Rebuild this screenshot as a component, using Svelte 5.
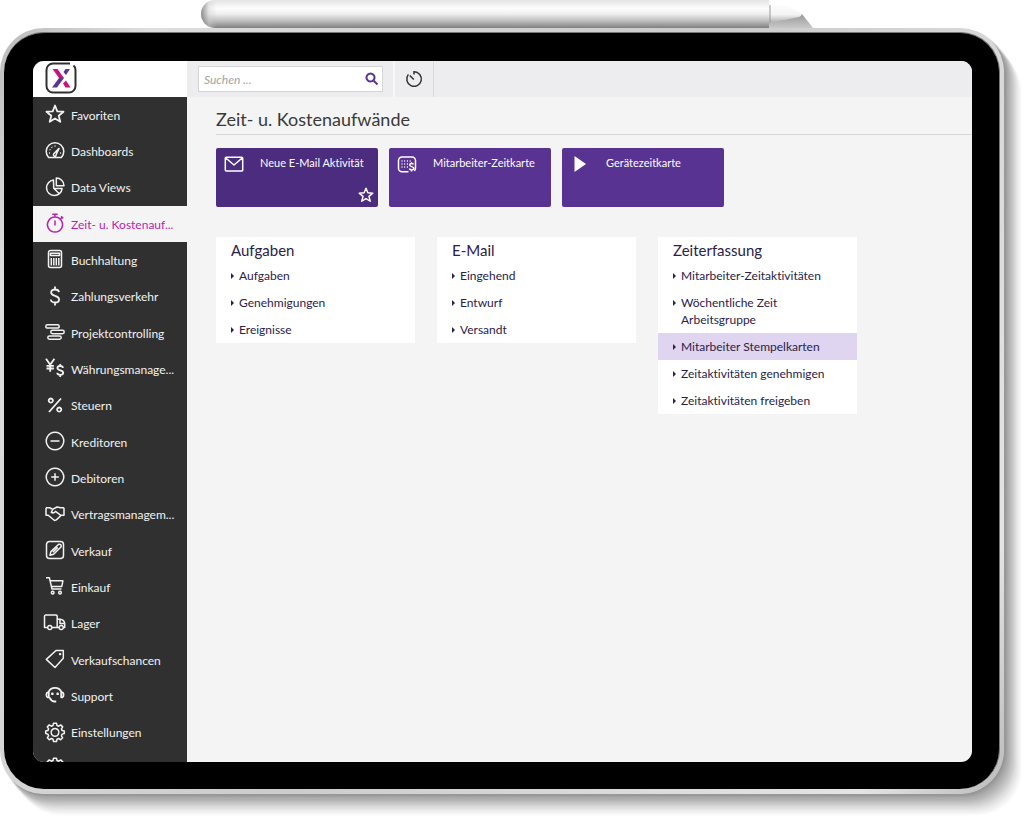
<script>
  const menu = [
    { icon: 'star', label: 'Favoriten' },
    { icon: 'gauge', label: 'Dashboards' },
    { icon: 'pie', label: 'Data Views' },
    { icon: 'timer', label: 'Zeit- u. Kostenauf...', active: true },
    { icon: 'calculator', label: 'Buchhaltung' },
    { icon: 'dollar', label: 'Zahlungsverkehr' },
    { icon: 'gantt', label: 'Projektcontrolling' },
    { icon: 'currency', label: 'Währungsmanage...' },
    { icon: 'percent', label: 'Steuern' },
    { icon: 'minus', label: 'Kreditoren' },
    { icon: 'plus', label: 'Debitoren' },
    { icon: 'handshake', label: 'Vertragsmanagem...' },
    { icon: 'edit', label: 'Verkauf' },
    { icon: 'cart', label: 'Einkauf' },
    { icon: 'truck', label: 'Lager' },
    { icon: 'tag', label: 'Verkaufschancen' },
    { icon: 'support', label: 'Support' },
    { icon: 'gear', label: 'Einstellungen' }
  ];

  const tiles = [
    { icon: 'mail', label: 'Neue E-Mail Aktivität', hovered: true },
    { icon: 'timecard', label: 'Mitarbeiter-Zeitkarte' },
    { icon: 'play', label: 'Gerätezeitkarte' }
  ];

  const cards = [
    { title: 'Aufgaben', links: ['Aufgaben', 'Genehmigungen', 'Ereignisse'] },
    { title: 'E-Mail', links: ['Eingehend', 'Entwurf', 'Versandt'] },
    {
      title: 'Zeiterfassung',
      links: [
        'Mitarbeiter-Zeitaktivitäten',
        'Wöchentliche Zeit Arbeitsgruppe',
        'Mitarbeiter Stempelkarten',
        'Zeitaktivitäten genehmigen',
        'Zeitaktivitäten freigeben'
      ],
      selected: 2
    }
  ];

  const bold = ['star', 'dollar', 'currency', 'percent', 'support'];

  const paths = {
    star: 'M10 1.500l2.300 5.800 6.200.4-4.800 4 1.600 6.100L10 14.400l-5.300 3.400 1.600-6.100-4.800-4 6.200-.4z',
    gauge: 'M3.600 17.500a8.800 8.800 0 1 1 12.800 0zM8.800 13.800a1.400 1.400 0 1 0 2.400.6l2.900-6zM4 13h1M4.600 9.500l.8.4M6.600 6.900l.5.7M10 5.500v1M15.100 13h1',
    pie: 'M8.500 3a7.800 7.800 0 1 0 8.600 8.600L8.700 11.300zM11.300 1v7.700h7.700A7.700 7.700 0 0 0 11.300 1zM9 11.500l4.800 4.800',
    timer: 'M10 4a7.500 7.500 0 1 0 .01 0zM10 4V1.500M7.300 1.200h5.400M10 7.500v5M15.600 5.800l1.700-1.700M16.200 3.200l2 2',
    calculator: 'M5.500 1.500h9a2 2 0 0 1 2 2v13a2 2 0 0 1-2 2h-9a2 2 0 0 1-2-2v-13a2 2 0 0 1 2-2zM5.500 4.300h9v2.200h-9zM6.300 9v7.500M8.800 9v7.500M11.300 9v7.500M13.800 9v7.500',
    dollar: 'M14 6.200C13.700 4.300 12.100 3.500 10 3.500c-2.300 0-3.900 1.100-3.900 3 0 4.200 8 2.500 8 6.900 0 2.100-1.700 3.100-4.100 3.100-2.300 0-4-.9-4.200-3M10 .5v3M10 16.500v3',
    gantt: 'M2.500 2.700h10a1.400 1.400 0 0 1 0 3.400h-10a1.400 1.400 0 0 1 0-3.400zM7.500 8.300h10a1.400 1.400 0 0 1 0 3.400h-10a1.400 1.400 0 0 1 0-3.400zM4.500 13.900h10a1.400 1.400 0 0 1 0 3.400h-10a1.400 1.400 0 0 1 0-3.400z',
    currency: 'M1 .8l4.200 6 4.200-6M5.200 6.800v7M1.500 7.800h7.400M1.500 10.500h7.400M18 9.800c-.2-1.200-1.300-1.800-2.800-1.800-1.700 0-2.800.8-2.800 2.100 0 2.900 5.800 1.600 5.800 4.600 0 1.500-1.300 2.100-3 2.100s-2.900-.6-3-2M15.200 6v2M15.200 16.800v2.200',
    percent: 'M16 3.500L4 17M5.800 3.500a2.100 2.100 0 1 0 .01 0zM14.200 12.500a2.100 2.100 0 1 0 .01 0z',
    minus: 'M10 1.300a8.700 8.700 0 1 0 .01 0zM5.500 10h9',
    plus: 'M10 1.300a8.700 8.700 0 1 0 .01 0zM6.200 10h7.600M10 6.200v7.600',
    handshake: 'M1 3.800h3.500l2.300.8M19 3.800h-3.300L12 3 8 5.200 6.200 8.300c1.300.9 3.200.4 4.300-.9l5.700 4.300M1 3.800v7.400h2.200l6.300 5.300 1.800-.6 5-4.600H19V3.800M8.500 5l-3.200-.4',
    edit: 'M4.500 1.500h11a3 3 0 0 1 3 3v11a3 3 0 0 1-3 3h-11a3 3 0 0 1-3-3v-11a3 3 0 0 1 3-3zM5 15.200l.9-3.600 7.800-7.400q2.600-.4 2.500 2.500l-7.600 7.600zM12.700 7.400l-4.800 4.800',
    cart: 'M1 1.800h3.400L7 13h9.500M4.900 4.800h13L16.800 10.400H6.400M7.700 15.300a1.300 1.300 0 1 0 .01 0zM15 15.300a1.300 1.300 0 1 0 .01 0z',
    truck: 'M2.500 14.500H-.5v-11.200a1.200 1.200 0 0 1 1.200-1.200h10.300a1.200 1.200 0 0 1 1.200 1.200v11.200H7.200M12.200 6.300h3a4.500 4.500 0 0 1 4.500 4.500v3.700h-1M15 6.500v4h4.600M12.200 14.500h1.800M4.800 12.400a2.100 2.100 0 1 0 .01 0zM16.200 12.400a2.100 2.100 0 1 0 .01 0z',
    tag: 'M11 1.500h7.300v7.800L10 18.500 1.300 10.400zM14.700 4.700h.8v.8h-.8z',
    support: 'M3.600 7a6.700 6 0 0 1 12.800 0M3.800 7.300v5H2.600C1 12 1 7.600 2.600 7.300zM16.200 7.300v5h1.200c1.600-.3 1.600-4.700 0-5zM4.600 12.600c1 2.300 2.400 3.500 4.600 3.900h2M7 8.500h.7v.7H7zM12.300 8.500h.7v.7h-.7z',
    gear: 'M8.500 1.200h3l.5 2.300 1.700.7 2-1.300 2 2-1.300 2 .7 1.700 2.200.5v2.400l-2.200.6-.7 1.800 1.300 1.900-2 2-2-1.300-1.700.7-.5 2.300h-3l-.5-2.300-1.700-.7-2 1.300-2-2 1.300-1.900-.7-1.800-2.200-.6V9.100l2.200-.5.7-1.700-1.300-2 2-2 2 1.300 1.700-.7zM10 6.400a3.900 3.900 0 1 0 .01 0z',
    mail: 'M2.300 3.300h15.400a1 1 0 0 1 1 1v11.600a1 1 0 0 1-1 1H2.300a1 1 0 0 1-1-1V4.300a1 1 0 0 1 1-1zM1.800 4l8.200 7 8.200-7',
    timecard: 'M11.500 17.800H5A3.500 3.500 0 0 1 1.500 14.300V6.500A3.500 3.500 0 0 1 5 3h10a3.500 3.500 0 0 1 3.500 3.500v7.800a3.500 3.500 0 0 1-1.200 2.700M4.500 7h1M7.200 7h1M9.900 7h1M12.600 7h1M4.500 10h1M7.200 10h1M9.900 10h1M4.500 13h1M7.200 13h1M9.900 13h1M16.400 10.600c-.3-.8-1-1-1.900-1-1 0-1.800.5-1.800 1.400 0 2 4 1.200 4 3.300 0 1.100-.9 1.600-2.100 1.600s-2-.5-2.200-1.400M14.500 8.300v1.300M14.500 15.900v1.700'
  };
</script>

{#snippet icon(name)}
  <svg class="icon" class:bold={bold.includes(name)} viewBox="0 0 20 20" aria-hidden="true">
    {#if name === 'play'}
      <path class="solid" d="M4.500 2v16L16 10z" />
    {:else}
      <path d={paths[name]} />
    {/if}
  </svg>
{/snippet}

<div class="stage">
  <div class="pencil" aria-hidden="true">
    <div class="barrel"></div>
    <svg class="tip" viewBox="0 0 44 28">
      <defs>
        <linearGradient id="cone" x1="0" y1="0" x2="0" y2="1">
          <stop offset="0" stop-color="#fff" />
          <stop offset="0.6" stop-color="#f4f4f4" />
          <stop offset="1" stop-color="#aaa" />
        </linearGradient>
        <linearGradient id="fall" x1="0" y1="0" x2="0" y2="1">
          <stop offset="0" stop-color="#999" />
          <stop offset="1" stop-color="#c8c8c8" />
        </linearGradient>
      </defs>
      <path d="M0 23L33 14 44 28H0z" fill="url(#fall)" />
      <path d="M0 2l20 5 12 6c1 1 1 3-2 4L0 23z" fill="url(#cone)" />
      <path d="M1 5v18" stroke="#999" fill="none" />
    </svg>
  </div>

  <div class="tablet">
    <div class="bezel">
      <div class="screen">
        <aside class="sidebar">
          <a class="brand" href="#start" aria-label="Startseite">
            <svg viewBox="0 0 32 32" aria-hidden="true">
              <path d="M25 1.500H8A6.500 6.500 0 0 0 1.500 8v16A6.500 6.500 0 0 0 8 30.500h16a6.500 6.500 0 0 0 6.500-6.500V8c0-2-.8-3.400-2-4.400" fill="none" stroke="#303033" stroke-width="2" />
              <path d="M7.500 7h5l6.500 9h-5z" fill="#c4147f" />
              <path d="M14 16h5l-7 9.500H7z" fill="#5b3596" />
              <path d="M20.500 7h4.500l-4 6-2.500-3z" fill="#5b3596" />
              <path d="M21 18.500l4.500 7h-5l-2.500-4z" fill="#c4147f" />
            </svg>
          </a>
          <nav aria-label="Hauptmenü">
            <ul>
              {#each menu as item}
                <li>
                  <a class:active={item.active} href="#{item.icon}" aria-current={item.active ? 'page' : undefined}>
                    {@render icon(item.icon)}
                    <span>{item.label}</span>
                  </a>
                </li>
              {/each}
              <li class="cut" aria-hidden="true">{@render icon('gear')}</li>
            </ul>
          </nav>
        </aside>

        <div class="workspace">
          <header class="topbar">
            <form class="search" role="search" onsubmit={(e) => e.preventDefault()}>
              <input type="search" placeholder="Suchen ..." aria-label="Suchen" />
              <button type="submit" aria-label="Suche starten">
                <svg viewBox="0 0 14 14" aria-hidden="true">
                  <path d="M5.500 1.500a4 4 0 1 0 .01 0zM8.500 8.500l4 4" />
                </svg>
              </button>
            </form>
            <button class="recent" type="button" aria-label="Zuletzt verwendet">
              <svg viewBox="0 0 20 20" aria-hidden="true">
                <path d="M10 5.500V2.700a7.300 7.300 0 1 1-5.600 2.700M10 2.700c1.500 0 2.700.4 3.800 1.100M9.800 10.500L5.800 6.500" />
              </svg>
            </button>
          </header>

          <main>
            <h1>Zeit- u. Kostenaufwände</h1>

            <div class="tiles">
              {#each tiles as tile}
                <button class="tile" class:hovered={tile.hovered} type="button">
                  {@render icon(tile.icon)}
                  <span>{tile.label}</span>
                  {#if tile.hovered}
                    <i class="fav">{@render icon('star')}</i>
                  {/if}
                </button>
              {/each}
            </div>

            <div class="cards">
              {#each cards as card}
                <section class="card">
                  <h2>{card.title}</h2>
                  <ul>
                    {#each card.links as link, i}
                      <li><a class:selected={card.selected === i} href="#liste">{link}</a></li>
                    {/each}
                  </ul>
                </section>
              {/each}
            </div>
          </main>
        </div>
      </div>
    </div>
  </div>
</div>

<style>
  :global(body) {
    margin: 0;
    background: #fff;
  }

  .stage,
  .stage * {
    box-sizing: border-box;
  }

  .stage {
    display: flex;
    flex-direction: column;
    height: 100vh;
    min-height: 600px;
    padding: 0 20px 24px 0;
    overflow: hidden;
    font-family: Lato, sans-serif;
    font-size: 12px;
    line-height: 17px;
    font-variant-ligatures: none;
    color: #2b2147;
  }

  .stage ul {
    margin: 0;
    padding: 0;
    list-style: none;
  }

  .stage a {
    color: inherit;
    text-decoration: none;
  }

  .stage button {
    font: inherit;
    font-variant-ligatures: none;
    border: 0;
    cursor: pointer;
  }

  .icon {
    flex: none;
    width: 20px;
    height: 20px;
    overflow: visible;
    fill: none;
    stroke: currentColor;
    stroke-width: 1.5;
    stroke-linejoin: round;
  }

  .icon.bold {
    stroke-width: 1.8;
  }

  .icon .solid {
    fill: currentColor;
    stroke: none;
  }

  .pencil {
    display: flex;
    flex: none;
    width: 61%;
    height: 28px;
    margin-left: 20%;
  }

  .barrel {
    flex: 1;
    border-radius: 14px 0 0 14px;
    background:
      linear-gradient(90deg, #777c, #ccc6 8px, transparent 16px),
      linear-gradient(#e4e4e4, #fdfdfd 30%, #eee 50%, #bbb 76%, #808080);
  }

  .tip {
    flex: none;
    width: 44px;
    height: 28px;
  }

  .tablet {
    flex: 1;
    min-height: 0;
    padding: 4px 4px 5px;
    border-radius: 44px;
    background: linear-gradient(120deg, #bbb, #ddd 10%, #ccc 50%, #e4e4e4 90%, #bbb);
    box-shadow:
      2px 2px 1px #989898,
      4px 4px 2px #a4a4a4,
      6px 7px 2px #b2b2b2,
      8px 9px 2px #bfbfbf,
      10px 11px 2px #cbcbcb,
      11px 13px 2px #d6d6d6,
      13px 15px 2px #e0e0e0,
      14px 17px 2px #e9e9e9,
      16px 19px 2px #f1f1f1,
      17px 21px 2px #f8f8f8;
  }

  .bezel {
    height: 100%;
    padding: 28px 27px 27px 29px;
    border: 1px solid #777;
    border-width: 1px 1px 0 0;
    border-radius: 40px;
    background: #000;
  }

  .screen {
    display: flex;
    height: 100%;
    overflow: hidden;
    border-radius: 11px;
    background: #f4f4f4;
  }

  .sidebar {
    display: flex;
    flex: none;
    flex-direction: column;
    width: 154px;
    background: #303030;
    color: #f2f2f2;
  }

  .brand {
    flex: none;
    height: 36px;
    padding: 1px 0 0 12px;
    background: #fff;
  }

  .brand svg {
    display: block;
    width: 32px;
    height: 32px;
  }

  nav,
  nav ul {
    display: flex;
    flex: 1;
    flex-direction: column;
    min-height: 0;
  }

  nav li {
    flex: 1 1 36px;
    min-height: 28px;
  }

  nav .cut {
    flex: 0 0 11px;
    min-height: 0;
    padding: 6px 0 0 12px;
    overflow: hidden;
  }

  nav a {
    display: flex;
    align-items: center;
    gap: 6px;
    height: 100%;
    padding: 0 4px 2px 12px;
    white-space: nowrap;
  }

  nav a span {
    padding-top: 2px;
  }

  nav a.active {
    background: #f4f4f4;
    color: #b91fae;
  }

  .workspace {
    flex: 1;
    min-width: 0;
  }

  .topbar {
    display: flex;
    align-items: stretch;
    height: 36px;
    padding-left: 11px;
    background: #ededf0;
  }

  .search {
    display: flex;
    align-items: center;
    width: 185px;
    height: 26px;
    margin: 5px 10px 5px 0;
    border: 1px solid #d5d5d8;
    background: #fff;
  }

  .search input {
    flex: 1;
    min-width: 0;
    padding: 0 5px;
    border: 0;
    outline: 0;
    background: none;
    font: italic 12px/17px Lato, sans-serif;
  }

  .search input::placeholder {
    color: #a3a3a3;
    opacity: 1;
  }

  .search button {
    display: grid;
    place-items: center;
    width: 20px;
    height: 24px;
    padding: 0;
    background: none;
  }

  .search svg {
    width: 14px;
    height: 14px;
    fill: none;
    stroke: #5b3596;
    stroke-width: 2;
  }

  .recent {
    display: grid;
    place-items: center;
    width: 41px;
    padding: 0;
    background: none;
    box-shadow: inset 2px 0 #f8f8f8, inset -1px 0 #d9d5ea;
  }

  .recent svg {
    width: 20px;
    height: 20px;
    fill: none;
    stroke: #333;
    stroke-width: 1.5;
  }

  main {
    padding-left: 29px;
  }

  h1,
  h2 {
    margin: 0;
    font-weight: 400;
  }

  h1 {
    height: 38px;
    padding-top: 10px;
    border-bottom: 1px solid #d6d6d6;
    font-size: 18px;
    line-height: 24px;
    color: #3a3a3a;
  }

  .tiles {
    display: flex;
    gap: 11px;
    padding: 13px 0 30px;
  }

  .stage .tile {
    position: relative;
    display: flex;
    align-items: flex-start;
    gap: 16px;
    width: 162px;
    height: 59px;
    padding: 6px 8px;
    border-radius: 2px;
    background: #583392;
    color: #fff;
    font-size: 11px;
    line-height: 17px;
    text-align: left;
    white-space: nowrap;
  }

  .stage .tile.hovered {
    background: #4c2c7f;
  }

  .fav {
    position: absolute;
    right: 4px;
    bottom: 4px;
    display: flex;
  }

  .fav .icon {
    width: 16px;
    height: 16px;
  }

  .cards {
    display: flex;
    flex-wrap: wrap;
    align-items: flex-start;
    gap: 22px;
  }

  .card {
    width: 199px;
    background: #fff;
  }

  h2 {
    padding: 3px 15px 2px;
    font-size: 15px;
    line-height: 20px;
  }

  .card a {
    display: block;
    position: relative;
    padding: 5px 24px 5px 23px;
  }

  .card a::before {
    content: '';
    position: absolute;
    top: 11px;
    left: 15px;
    border: 3px solid transparent;
    border-left-color: #2b2147;
    border-right: 0;
  }

  .card a.selected {
    background: #dfd5f0;
  }
</style>
